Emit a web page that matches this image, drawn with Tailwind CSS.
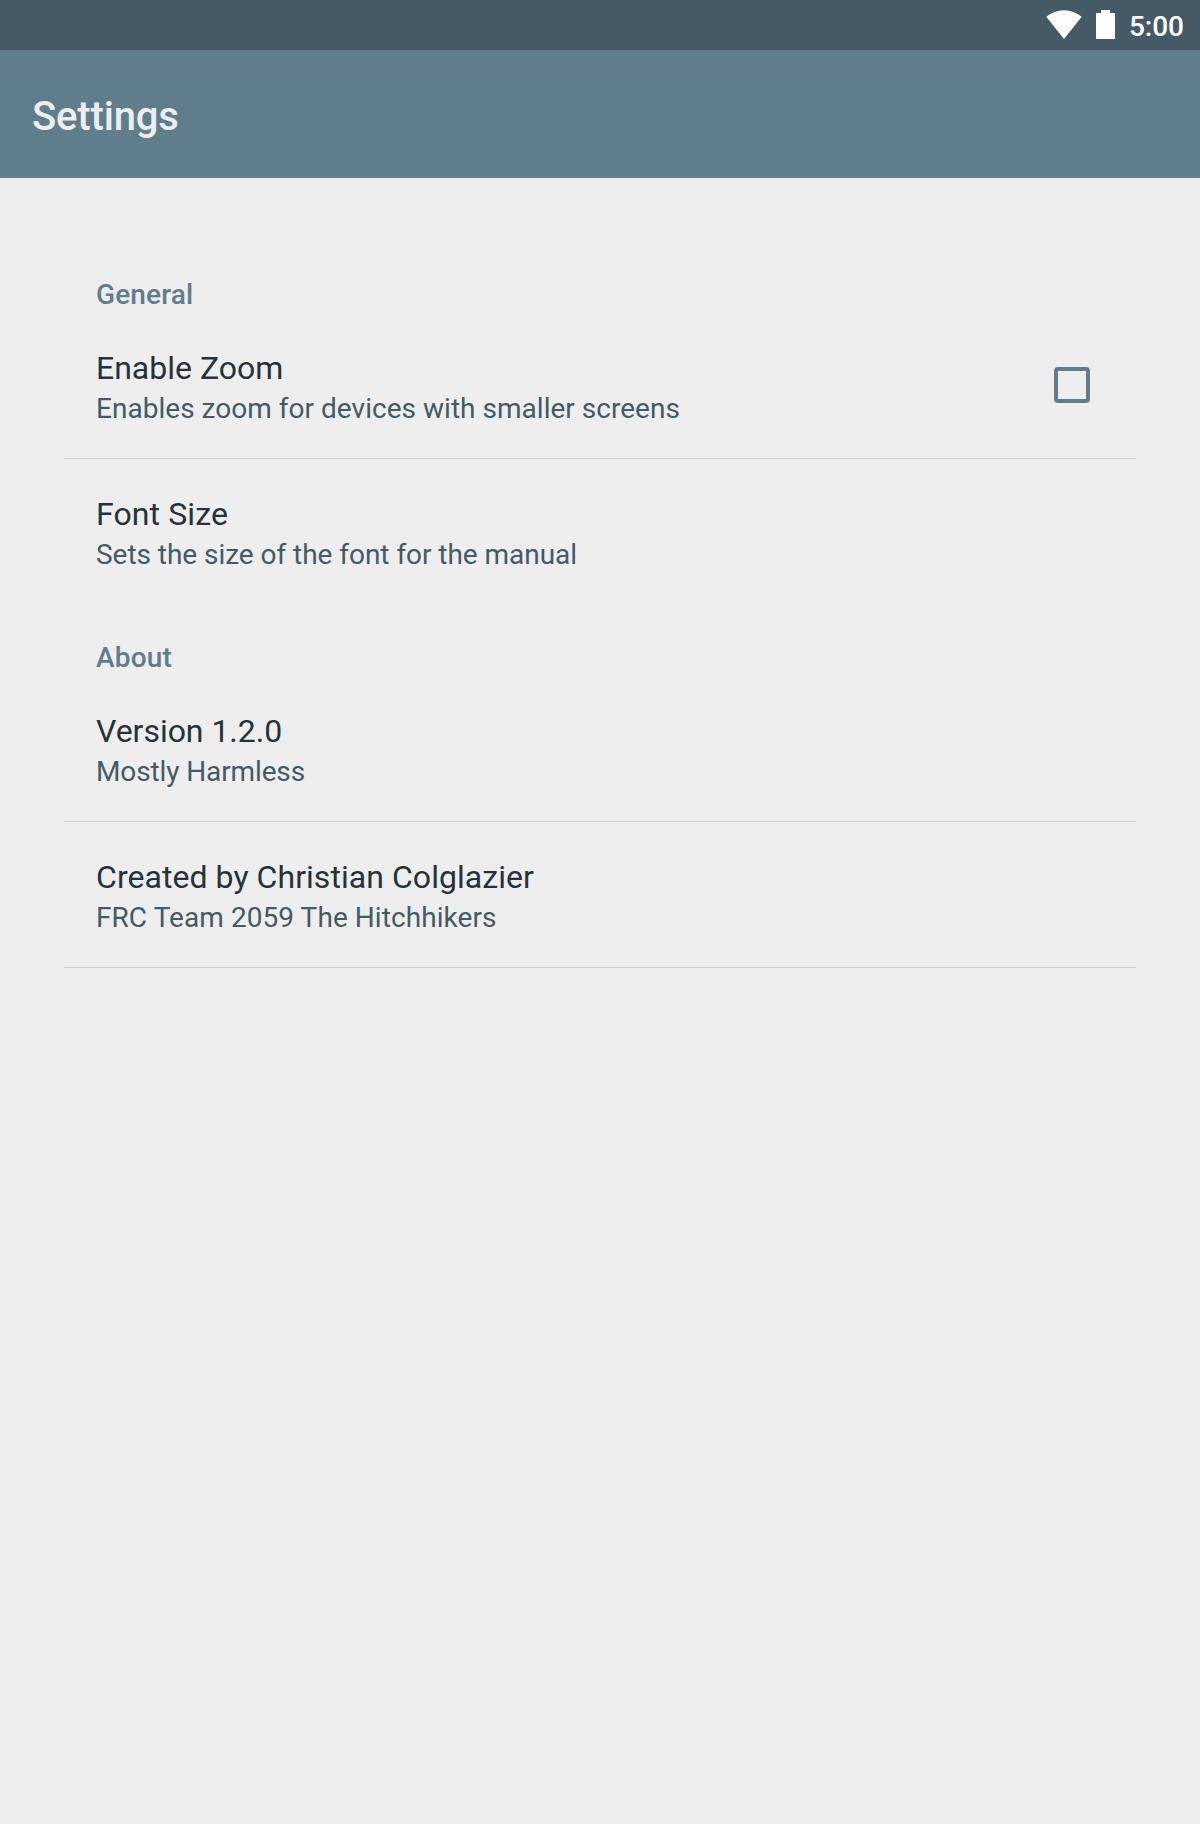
<!DOCTYPE html>
<html lang="en"><head><meta charset="utf-8"><title>Settings</title>
<script src="https://cdn.jsdelivr.net/npm/@tailwindcss/browser@4"></script></head>
<body class="bg-[#eeeeee] font-[Roboto,sans-serif] min-h-[1824px]">
<div class="h-[50px] bg-[#455a64] flex items-start justify-end pr-4 pt-[10px] text-white">
<svg class="w-9 h-[29px] mr-[14px]" viewBox="0 0 36 29" fill="currentColor"><path d="M18 29 35.700 6.800C30.500 2.400 24.500 0.200 18 0.200S5.500 2.400 0.300 6.800Z"/></svg>
<svg class="w-[19px] h-[29px] mr-[14px]" viewBox="0 0 19 29" fill="currentColor"><path d="M5 0h9v3h4.300q.7 0 .7.700V28.300q0 .7-.7.700H.7q-.7 0-.7-.700V3.700q0-.7.7-.700H5z"/></svg>
<span class="text-[28px] font-medium leading-[33px]">5:00</span>
</div>
<header class="h-32 bg-[#607d8b] flex items-center pl-8 text-[40px] font-medium text-[#eceff1]"><h1 class="pt-[5px] tracking-[-0.15px]">Settings</h1></header>
<main class="px-16 pt-[85px]">
<h2 class="h-16 px-8 leading-[63px] text-[28px] font-medium tracking-[0.15px] text-[#607d8b]">General</h2>
<section class="h-[132px] px-8 pt-[22px] border-b border-[#cfcfcf] flex justify-between">
<div><p class="text-[32px] leading-[38px] text-[#263238]">Enable Zoom</p><p class="text-[28px] leading-[43px] tracking-[0.025px] text-[#455a64]">Enables zoom for devices with smaller screens</p></div>
<div class="w-9 h-9 mt-[18px] mr-[14px] border-4 rounded border-[#607d8b]"></div>
</section>
<section class="h-[167px] px-8 pt-9"><p class="text-[32px] leading-[38px] tracking-[0.1px] text-[#263238]">Font Size</p><p class="text-[28px] leading-[43px] tracking-[-0.04px] text-[#455a64]">Sets the size of the font for the manual</p></section>
<h2 class="h-16 px-8 leading-[63px] text-[28px] font-medium tracking-[0.2px] text-[#607d8b]">About</h2>
<section class="h-[132px] px-8 pt-[22px] border-b border-[#cfcfcf]"><p class="text-[32px] leading-[38px] tracking-[-0.03px] text-[#263238]">Version 1.2.0</p><p class="text-[28px] leading-[43px] tracking-[-0.12px] text-[#455a64]">Mostly Harmless</p></section>
<section class="h-[146px] px-8 pt-9 border-b border-[#cfcfcf]"><p class="text-[32px] leading-[38px] tracking-[0.05px] text-[#263238]">Created by Christian Colglazier</p><p class="text-[28px] leading-[43px] tracking-[0.07px] text-[#455a64]">FRC Team 2059 The Hitchhikers</p></section>
</main></body></html>
